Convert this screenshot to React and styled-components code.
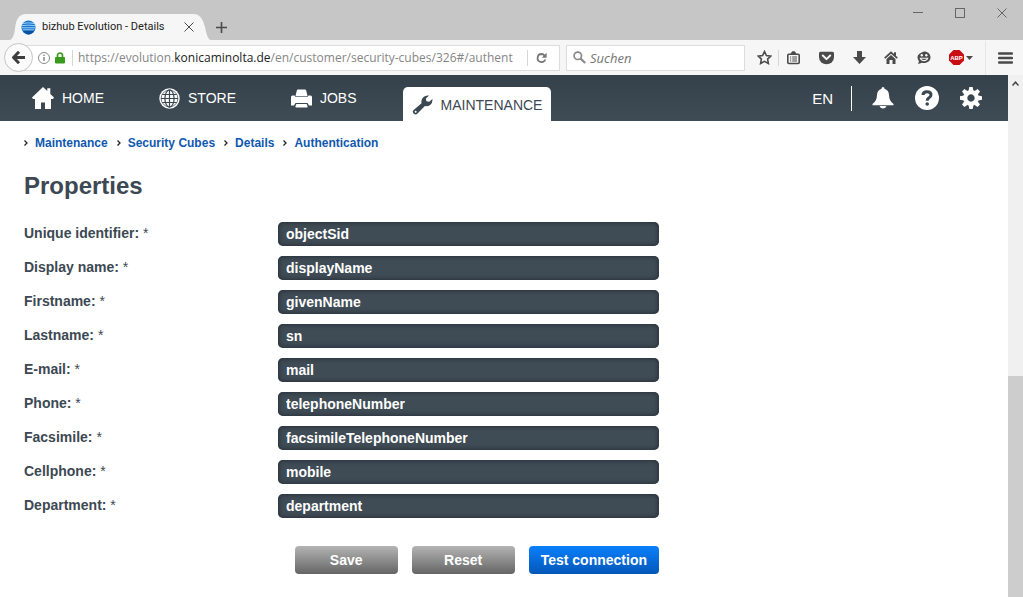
import React, { useState } from "react";
import styled, { createGlobalStyle, css } from "styled-components";

const slate = "#3c4852";
const uiFont = '"Open Sans", "Noto Sans", sans-serif';
const siteFont = '"Liberation Sans", Arial, sans-serif';

const GlobalStyle = createGlobalStyle`
  *, *::before, *::after { box-sizing: border-box; }
  body { margin: 0; background: #fff; font-family: ${siteFont}; color: ${slate}; }
  button, input { font: inherit; }
`;

const Window = styled.div`
  display: flex;
  flex-direction: column;
  min-height: 100vh;
`;

/* ---------- browser title bar ---------- */

const TitleBar = styled.header`
  display: flex;
  align-items: flex-end;
  height: 40px;
  padding-left: 10px;
  background: #c6c6c6;
  font-family: ${uiFont};
`;

const BrowserTab = styled.div`
  position: relative;
  display: flex;
  align-items: center;
  gap: 6px;
  width: 200px;
  height: 26px;
  padding: 0 10px 0 11px;
  color: #222;
  font-family: Roboto, sans-serif;
  font-size: 11px;
  line-height: 16px;
`;

const TabShape = styled.svg`
  position: absolute;
  inset: 0;
  width: 100%;
  height: 100%;
`;

const TabTitle = styled.span`
  position: relative;
  flex: 1;
  white-space: nowrap;
`;

const IconButton = styled.button`
  position: relative;
  display: flex;
  align-items: center;
  justify-content: center;
  gap: 2px;
  flex: none;
  width: ${(p) => p.$w || 16}px;
  height: ${(p) => p.$h || 26}px;
  padding: 0;
  border: 0;
  background: none;
  color: ${(p) => p.$color || "#4a4a4a"};
`;

const WindowControls = styled.div`
  display: flex;
  align-self: flex-start;
  margin-left: auto;
`;

/* ---------- browser toolbar ---------- */

const Toolbar = styled.div`
  display: flex;
  align-items: center;
  height: 35px;
  padding: 0 7px 0 4px;
  background: #f6f6f6;
  font-family: ${uiFont};
`;

const BackButton = styled.button`
  display: flex;
  align-items: center;
  justify-content: center;
  position: relative;
  z-index: 1;
  flex: none;
  width: 29px;
  height: 29px;
  margin-right: -15px;
  padding: 0;
  border: 1px solid #c4c4c4;
  border-radius: 50%;
  background: #fbfbfb;
  color: #3e3e3e;
`;

const fieldBox = css`
  display: flex;
  align-items: center;
  height: 26px;
  border: 1px solid #dcdcdc;
  background: #fff;
`;

const AddressBar = styled.div`
  ${fieldBox}
  flex: 1;
  min-width: 0;
  padding: 0 4px 0 19px;
`;

const Address = styled.a`
  flex: 1;
  min-width: 0;
  color: #868686;
  font-size: 12px;
  line-height: 20px;
  white-space: nowrap;
  text-decoration: none;
`;

const Host = styled.span`
  color: #222;
`;

const Divider = styled.span`
  flex: none;
  width: 1px;
  height: ${(p) => p.$h || 16}px;
  margin: ${(p) => p.$m || "0"};
  background: ${(p) => p.$color || "#d6d6d6"};
`;

const SearchBox = styled.label`
  ${fieldBox}
  flex: none;
  gap: 4px;
  width: 179px;
  margin-left: 6px;
  padding: 0 6px;
  color: #8a8a8a;
`;

const SearchInput = styled.input`
  flex: 1;
  min-width: 0;
  padding: 0;
  border: 0;
  outline: 0;
  background: none;
  font-size: 13px;
  line-height: 20px;
  &::placeholder { color: #757575; font-style: italic; opacity: 1; }
`;

const Tools = styled.div`
  display: flex;
  align-items: center;
  flex: none;
  margin-left: 8px;
`;

/* ---------- web page ---------- */

const Viewport = styled.div`
  display: flex;
  flex: 1;
`;

const Page = styled.div`
  flex: 1;
  min-width: 0;
`;

const SiteNav = styled.nav`
  display: flex;
  align-items: center;
  height: 46px;
  padding: 0 24px 0 32px;
  background: linear-gradient(#35414a, #3f4b55);
  font-size: 14px;
`;

const NavLink = styled.a`
  display: flex;
  align-items: center;
  gap: 8px;
  height: 46px;
  margin-right: 55px;
  color: #fff;
  text-decoration: none;

  ${(p) =>
    p.$active &&
    css`
      align-self: flex-end;
      height: 34px;
      margin: 0 0 0 -9px;
      padding: 2px 9px 0;
      border-radius: 5px 5px 0 0;
      background: #fff;
      color: ${slate};
    `}
`;

const NavTools = styled.div`
  display: flex;
  align-items: center;
  margin-left: auto;
  gap: 18px;
  color: #fff;
`;

const Language = styled.a`
  color: #fff;
  font-size: 15px;
  text-decoration: none;
`;

const Content = styled.main`
  padding: 14px 24px 24px;
`;

const Crumbs = styled.nav`
  display: flex;
  gap: 9px;
  font-size: 12px;
  line-height: 16px;
  font-weight: bold;
`;

const Crumb = styled.a`
  display: flex;
  align-items: center;
  gap: 7px;
  color: #0f58b0;
  text-decoration: none;
`;

const Title = styled.h1`
  margin: 20px 0 21px;
  font-size: 24px;
  line-height: 30px;
`;

const Form = styled.form`
  display: flex;
  flex-direction: column;
  gap: 10px;
  max-width: 635px;
`;

const Field = styled.div`
  display: grid;
  grid-template-columns: 2fr 3fr;
  height: 24px;
`;

const Label = styled.label`
  font-size: 14px;
  line-height: 22px;
  font-weight: bold;
`;

const Star = styled.span`
  font-weight: normal;
`;

const TextInput = styled.input`
  width: 100%;
  height: 24px;
  padding: 0 8px;
  border: 0;
  border-radius: 5px;
  background: #3f4b55;
  box-shadow: inset 0 0 4px 1px #28323a;
  color: #fff;
  font-size: 14px;
  font-weight: bold;
`;

const Actions = styled.div`
  display: flex;
  justify-content: flex-end;
  gap: 14px;
  padding-top: 18px;
`;

const Button = styled.button`
  min-width: 103px;
  height: 28px;
  padding: 0 12px;
  border: 0;
  border-radius: 4px;
  background: ${(p) =>
    p.$primary ? "linear-gradient(#0a80fb, #0457b8)" : "linear-gradient(#b4b4b4, #656565)"};
  color: #fff;
  font-size: 14px;
  font-weight: bold;
`;

const Scrollbar = styled.div`
  display: flex;
  flex-direction: column;
  width: 15px;
  background: #f0f0f0;
`;

const Track = styled.div`
  flex: 283;
`;

const Thumb = styled.div`
  flex: 221;
  background: #cdcdcd;
`;

/* ---------- icons ---------- */

const IconSvg = styled.svg`
  position: relative;
  flex: none;
`;

const Svg = ({ w, h = w, box = `0 0 ${w} ${h}`, children }) => (
  <IconSvg width={w} height={h} viewBox={box} fill="none" aria-hidden="true">
    {children}
  </IconSvg>
);

const Favicon = () => (
  <Svg w={15} box="0 0 16 16">
    <circle cx="8" cy="8" r="7.5" fill="#1976cf" />
    <path d="M2 3.7Q8 2.3 14 3.7M1 6Q8 5 15 6M1 8.3h14M2 10.5h12" stroke="#a8d9fb" strokeWidth="1" />
    <path d="M2 11.5h12Q11 15.5 8 15.5T2 11.5z" fill="#0b4fa0" />
  </Svg>
);
const Cross = ({ s = 10 }) => (
  <Svg w={s} box="0 0 10 10">
    <path d="M.5.5l9 9M9.5.5l-9 9" stroke="currentColor" strokeWidth="1" />
  </Svg>
);
const Plus = () => (
  <Svg w={11}><path d="M5.5 0v11M0 5.5h11" stroke="currentColor" strokeWidth="1.6" /></Svg>
);
const BackArrow = () => (
  <Svg w={14} h={13}>
    <path d="M7 .8L1.5 6.5 7 12.2M2 6.5h11" stroke="currentColor" strokeWidth="3" />
  </Svg>
);
const Info = () => (
  <Svg w={12}>
    <circle cx="6" cy="6" r="5.5" stroke="#8b8b8b" />
    <path d="M6 5v4M6 2.8v1.3" stroke="#777" strokeWidth="1.3" />
  </Svg>
);
const Lock = () => (
  <Svg w={10} h={12}>
    <path d="M2.5 6V3.5a2.5 2.5 0 015 0V6" stroke="#3a9a1c" strokeWidth="1.7" />
    <rect y="5" width="10" height="6.5" rx="1" fill="#3a9a1c" />
  </Svg>
);
const Reload = () => (
  <Svg w={11} h={12}>
    <path d="M9.3 7.5A4 4 0 115.500 2Q7.600 2 8.600 3.800" stroke="currentColor" strokeWidth="1.800" />
    <path d="M10.600.700v5H5.800z" fill="currentColor" />
  </Svg>
);
const Magnifier = () => (
  <Svg w={13}>
    <circle cx="4.8" cy="4.8" r="3.7" stroke="currentColor" strokeWidth="1.7" />
    <path d="M7.5 7.5l4.7 4.5" stroke="currentColor" strokeWidth="2.3" />
  </Svg>
);
const Star5 = () => (
  <Svg w={15}>
    <path d="M7.5 1.500l1.900 4 4.300.600-3.100 3 .800 4.300-3.900-2.100-3.900 2.100.800-4.300-3.100-3 4.300-.600z" stroke="currentColor" strokeWidth="1.600" />
  </Svg>
);
const Clipboard = () => (
  <Svg w={13} h={14}>
    <rect x=".8" y="3.300" width="11.400" height="9.200" rx="1" stroke="currentColor" strokeWidth="1.600" />
    <path d="M4 3L5.300.800h2.400L9 3z" fill="currentColor" stroke="currentColor" />
    <path d="M3 6h1.200M5.200 6H10M3 8h1.200M5.200 8H10M3 10h1.200M5.200 10H10" stroke="currentColor" strokeWidth="1.100" />
  </Svg>
);
const Pocket = () => (
  <Svg w={15} h={14}>
    <path d="M1.5.8h12Q15 .8 15 2.3V6a7.5 7.3 0 01-15 0V2.3Q0 .8 1.500.8z" fill="currentColor" />
    <path d="M3.800 4.500l3.700 3.600 3.700-3.600" stroke="#f6f6f6" strokeWidth="2" strokeLinecap="round" strokeLinejoin="round" />
  </Svg>
);
const Download = () => (
  <Svg w={13}><path d="M4 0h5v6h4l-6.500 7L0 6h4z" fill="currentColor" /></Svg>
);
const SmallHouse = () => (
  <Svg w={14} h={13}>
    <path d="M.7 7.200L7 1.500l6.300 5.700" stroke="currentColor" strokeWidth="1.700" />
    <path d="M10 1.200h2v4l-2-2z" fill="currentColor" />
    <path d="M2.500 8L7 4l4.500 4v5H8.500V9h-3v4h-3z" fill="currentColor" />
  </Svg>
);
const Smiley = () => (
  <Svg w={14} h={13}>
    <path d="M7 .5c3.800 0 6.500 2.400 6.500 5.700S10.800 12 7 12q-1.200 0-2.300-.3Q3 12.900.8 12.800 2 11.600 1.900 10.200.5 8.500.5 6.200.5 2.900 7 .5z" fill="currentColor" />
    <circle cx="4.800" cy="4.300" r="1.200" fill="#f6f6f6" />
    <circle cx="9.300" cy="4.300" r="1.200" fill="#f6f6f6" />
    <path d="M2.500 6.800h9q-1 3.400-4.500 3.400T2.500 6.800z" fill="#f6f6f6" />
    <path d="M4.200 7.800h5.600q-.8 1.300-2.800 1.300T4.200 7.800z" fill="currentColor" />
  </Svg>
);
const AdBlock = () => (
  <Svg w={15}>
    <path d="M4.500 0h6L15 4.500v6L10.500 15h-6L0 10.500v-6z" fill="#c90d12" />
    <text x="7.500" y="10" textAnchor="middle" fontFamily="Liberation Sans, sans-serif" fontSize="6" fontWeight="bold" fill="#fff">ABP</text>
  </Svg>
);
const Caret = () => <Svg w={7} h={4}><path d="M0 0h7L3.500 4z" fill="currentColor" /></Svg>;
const Burger = () => (
  <Svg w={15} h={12}>
    <path d="M1 1.500h13M1 6h13M1 10.500h13" stroke="currentColor" strokeWidth="2.400" strokeLinecap="round" />
  </Svg>
);
const House = () => (
  <Svg w={22}>
    <path d="M11 0l4.300 4V1.200h3V7L22 10.500l-1 1.500h-2v10h-6v-6.500H9V22H3V12H1l-1-1.500z" fill="currentColor" />
  </Svg>
);
const Globe = () => (
  <Svg w={21}>
    <circle cx="10.500" cy="10.500" r="10.200" fill="currentColor" />
    <g stroke="#3a4650" strokeWidth="1.200">
      <path d="M10.500 2v17M2 10.500h17M3.300 6.500h14.400M3.300 14.500h14.400" />
      <ellipse cx="10.500" cy="10.500" rx="4.600" ry="8.600" />
      <circle cx="10.500" cy="10.500" r="8.400" strokeWidth=".7" />
    </g>
  </Svg>
);
const Printer = () => (
  <Svg w={21} h={19}>
    <path d="M4.500 7L5.800 1.500Q6 .5 7 .5h7q1 0 1.200 1L16.500 7z" fill="currentColor" />
    <path d="M1.500 6.500H3.500L4.500 8h12l1-1.500h2Q21 6.500 21 8v8.500h-3L16.500 14h-12L3 16.500H0V8Q0 6.500 1.500 6.500z" fill="currentColor" />
    <path d="M5.300 15h10.400l1 2.800q0 .7-1 .7H5.300q-1 0-1-.7z" fill="currentColor" />
    <path d="M4 7.500h13" stroke="#8d969c" strokeWidth=".8" />
  </Svg>
);
const Wrench = () => (
  <Svg w={21} h={20}>
    <path d="M1.400 15.300L9.500 8.200Q8.700 4.600 11.300 2.200 13.700 0 17 .6L13.900 3.500l.5 2.800 2.800.4L20.400 4q.4 3.400-2 5.700-2.400 2-5.500 1.400L5.300 18.700q-1.600 1.400-3.400 0-2-1.700-.5-3.400z" fill="currentColor" />
    <circle cx="3.600" cy="16.700" r="1" fill="#fff" />
  </Svg>
);
const Bell = () => (
  <Svg w={22}>
    <path d="M11 0q1.500 0 1.500 1.700 4.300 1.400 4.500 6.300.2 6.300 4.500 9v1.200H.5V17Q4.800 14.300 5 8 5.200 3.100 9.500 1.700 9.500 0 11 0z" fill="currentColor" />
    <path d="M7.500 19h7q-1 2.500-3.500 2.500T7.500 19z" fill="currentColor" />
  </Svg>
);
const Help = () => (
  <Svg w={24}>
    <circle cx="12" cy="12" r="12" fill="currentColor" />
    <path d="M8 9Q8 5.800 12 5.800t4 3q0 1.800-2 3-1.800 1-1.800 3" stroke="#3a4650" strokeWidth="3" />
    <circle cx="12.200" cy="18" r="1.800" fill="#3a4650" />
  </Svg>
);
const Gear = () => (
  <Svg w={22} box="-11 -11 22 22">
    <circle r="5.800" stroke="currentColor" strokeWidth="4.200" />
    {[0, 45, 90, 135, 180, 225, 270, 315].map((a) => (
      <path key={a} d="M-2.400-7L-1.700-11H1.700L2.400-7z" fill="currentColor" transform={`rotate(${a})`} />
    ))}
  </Svg>
);
const Chevron = () => (
  <Svg w={4} h={6}><path d="M.5.500L3 3 .5 5.500" stroke="#222" strokeWidth="1.300" /></Svg>
);

/* ---------- data ---------- */

const fields = [
  ["uid", "Unique identifier:", "objectSid"],
  ["display", "Display name:", "displayName"],
  ["first", "Firstname:", "givenName"],
  ["last", "Lastname:", "sn"],
  ["email", "E-mail:", "mail"],
  ["phone", "Phone:", "telephoneNumber"],
  ["fax", "Facsimile:", "facsimileTelephoneNumber"],
  ["cell", "Cellphone:", "mobile"],
  ["dept", "Department:", "department"],
];
const initial = Object.fromEntries(fields.map(([id, , value]) => [id, value]));
const crumbs = ["Maintenance", "Security Cubes", "Details", "Authentication"];

export default function App() {
  const [values, setValues] = useState(initial);

  return (
    <Window>
      <GlobalStyle />
      <TitleBar>
        <BrowserTab>
          <TabShape viewBox="0 0 200 26" preserveAspectRatio="none" aria-hidden="true">
            <path d="M0 26Q4 24 5 15 6 0 16 0H184Q192 0 195 13 197 24 200 26z" fill="#f6f6f6" />
          </TabShape>
          <Favicon />
          <TabTitle>bizhub Evolution - Details</TabTitle>
          <IconButton $w={22} aria-label="Close tab"><Cross /></IconButton>
        </BrowserTab>
        <IconButton $w={22} aria-label="New tab"><Plus /></IconButton>
        <WindowControls>
          <IconButton $w={42} $color="#666" aria-label="Minimize">
            <Svg w={10}><path d="M0 4.500h10" stroke="currentColor" /></Svg>
          </IconButton>
          <IconButton $w={42} $color="#666" aria-label="Maximize">
            <Svg w={10}><rect x=".5" y=".5" width="9" height="9" stroke="currentColor" /></Svg>
          </IconButton>
          <IconButton $w={42} $color="#666" aria-label="Close"><Cross /></IconButton>
        </WindowControls>
      </TitleBar>

      <Toolbar>
        <BackButton aria-label="Back"><BackArrow /></BackButton>
        <AddressBar>
          <Info />
          <Divider $color="transparent" $m="0 2px" />
          <Lock />
          <Divider $m="0 5px 0 7px" />
          <Address href="#/authent">
            https://evolution.<Host>konicaminolta.de</Host>/en/customer/security-cubes/326#/authent
          </Address>
          <Divider $m="0 0 0 22px" />
          <IconButton $w={27} $h={24} $color="#777" aria-label="Reload"><Reload /></IconButton>
        </AddressBar>
        <SearchBox>
          <Magnifier />
          <SearchInput placeholder="Suchen" aria-label="Suchen" />
        </SearchBox>
        <Tools>
          <IconButton $w={22} aria-label="Bookmark"><Star5 /></IconButton>
          <Divider $m="0 3px" />
          <IconButton $w={22} aria-label="Bookmarks list"><Clipboard /></IconButton>
          <IconButton $w={44} aria-label="Pocket"><Pocket /></IconButton>
          <IconButton $w={22} aria-label="Downloads"><Download /></IconButton>
          <IconButton $w={42} aria-label="Start page"><SmallHouse /></IconButton>
          <IconButton $w={24} aria-label="Chat"><Smiley /></IconButton>
          <IconButton $w={49} aria-label="Ad blocker"><AdBlock /><Caret /></IconButton>
          <Divider $h={34} $m="0 8px 0 0" $color="#e6e6e6" />
          <IconButton $w={22} aria-label="Menu"><Burger /></IconButton>
        </Tools>
      </Toolbar>

      <Viewport>
        <Page>
          <SiteNav>
            <NavLink href="#home"><House />HOME</NavLink>
            <NavLink href="#store"><Globe />STORE</NavLink>
            <NavLink href="#jobs"><Printer />JOBS</NavLink>
            <NavLink href="#maintenance" $active><Wrench />MAINTENANCE</NavLink>
            <NavTools>
              <Language href="#language">EN</Language>
              <Divider $h={25} $color="#fff" />
              <IconButton $w={26} $color="#fff" aria-label="Notifications"><Bell /></IconButton>
              <IconButton $w={26} $color="#fff" aria-label="Help"><Help /></IconButton>
              <IconButton $w={26} $color="#fff" aria-label="Settings"><Gear /></IconButton>
            </NavTools>
          </SiteNav>
          <Content>
            <Crumbs aria-label="Breadcrumb">
              {crumbs.map((c) => (
                <Crumb key={c} href="#crumb"><Chevron />{c}</Crumb>
              ))}
            </Crumbs>
            <Title>Properties</Title>
            <Form onSubmit={(e) => e.preventDefault()}>
              {fields.map(([id, label]) => (
                <Field key={id}>
                  <Label htmlFor={id}>{label} <Star>*</Star></Label>
                  <TextInput
                    id={id}
                    value={values[id]}
                    onChange={(e) => setValues({ ...values, [id]: e.target.value })}
                  />
                </Field>
              ))}
              <Actions>
                <Button type="submit">Save</Button>
                <Button type="button" onClick={() => setValues(initial)}>Reset</Button>
                <Button type="button" $primary>Test connection</Button>
              </Actions>
            </Form>
          </Content>
        </Page>
        <Scrollbar aria-hidden="true">
          <IconButton as="span" $w={15} $h={17}>
            <Svg w={7} h={5}><path d="M.5 4.500l3-3.300 3 3.300" stroke="#444" strokeWidth="1.500" /></Svg>
          </IconButton>
          <Track />
          <Thumb />
        </Scrollbar>
      </Viewport>
    </Window>
  );
}
